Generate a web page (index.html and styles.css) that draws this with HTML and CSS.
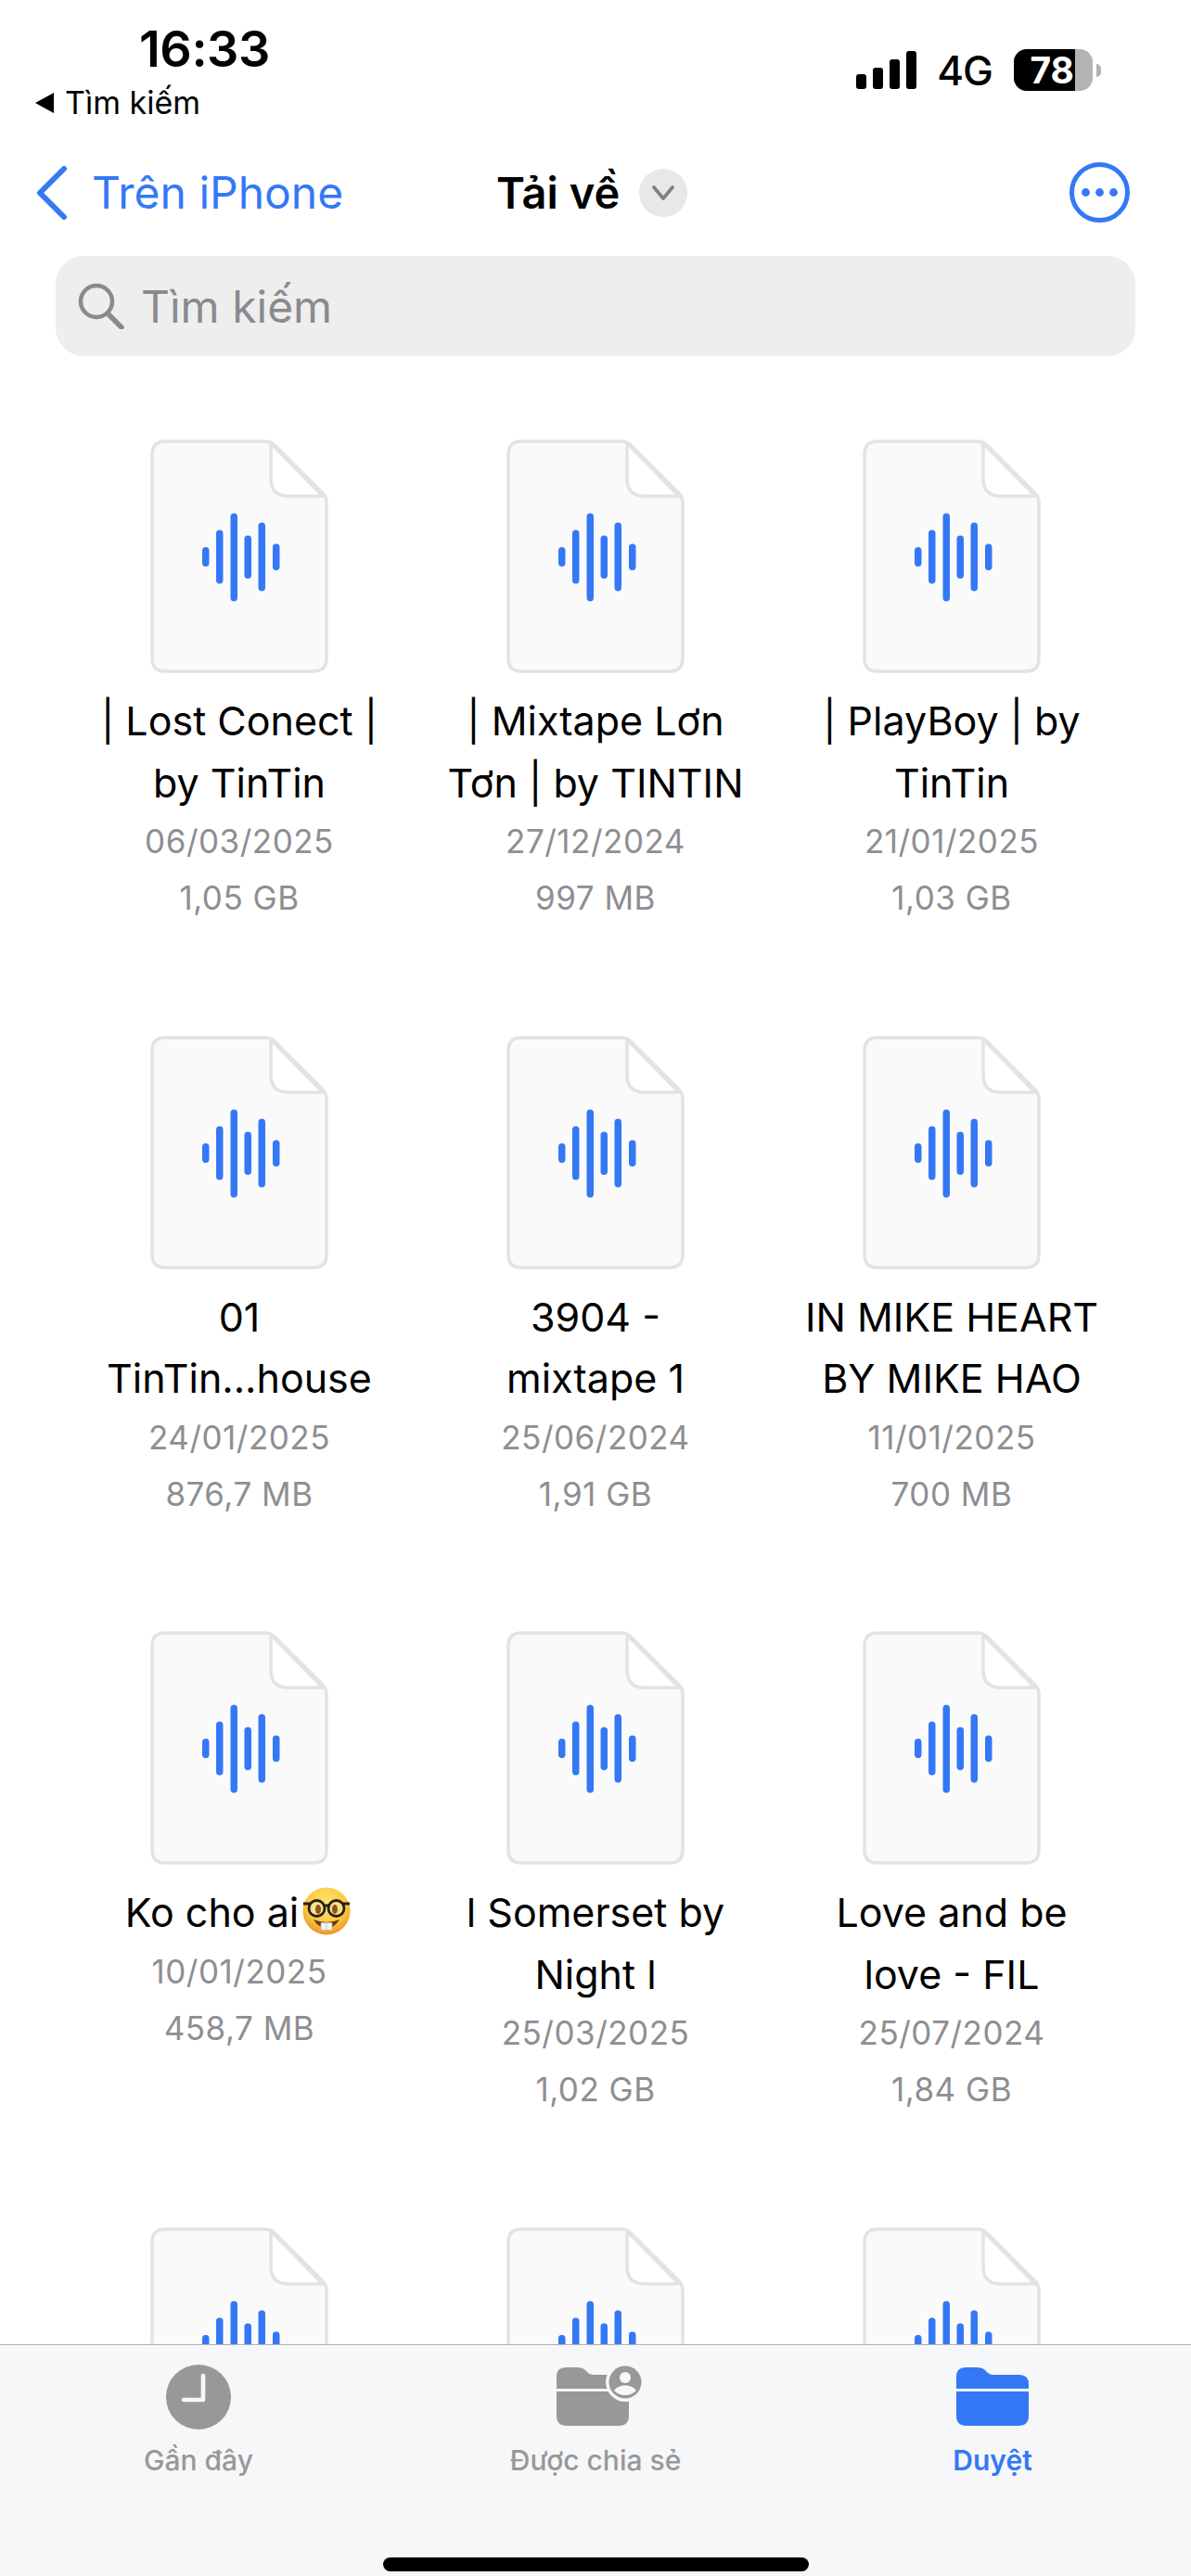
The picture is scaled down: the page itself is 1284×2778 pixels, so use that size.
FILE: index.html
```html
<!DOCTYPE html>
<html lang="vi">
<head>
  <meta charset="utf-8">
  <title>Tải về</title>
  <link rel="stylesheet" href="styles.css">
</head>
<body>

  <svg class="defs" width="0" height="0">
    <symbol id="doc" viewBox="0 0 192 252">
      <path d="M16 2H124Q130 2 134 6L186 58Q190 62 190 68V236Q190 250 176 250H16Q2 250 2 236V16Q2 2 16 2Z" fill="#fafafa" stroke="#e3e3e3" stroke-width="3.5"/>
      <path d="M130 4V42Q130 61 149 61H186Z" fill="#fff" stroke="#e3e3e3" stroke-width="3.5" stroke-linejoin="round"/>
      <g fill="#3478f6">
        <rect x="56" y="116" width="7.5" height="21" rx="3.7"/>
        <rect x="71" y="97.5" width="7.5" height="58" rx="3.7"/>
        <rect x="86.5" y="79.5" width="7.5" height="95" rx="3.7"/>
        <rect x="101.5" y="103.5" width="7.5" height="46.5" rx="3.7"/>
        <rect x="116.5" y="89.5" width="7.5" height="74" rx="3.7"/>
        <rect x="132" y="112.5" width="7.5" height="28.5" rx="3.7"/>
      </g>
    </symbol>
    <symbol id="folder" viewBox="0 0 78 63">
      <path d="M0 10Q0 0 10 0H22Q28 0 31 3L34 6Q36 8 40 8H68Q78 8 78 18V23H0Z" fill="currentColor"/>
      <path d="M0 26H78V52Q78 63 67 63H11Q0 63 0 52Z" fill="currentColor"/>
    </symbol>
  </svg>

  <div class="full_page">

    <div class="status">
      <div class="status_left">
        <div class="time">16:33</div>
        <div class="back_app"><span class="back_arrow"></span>Tìm kiếm</div>
      </div>
      <div class="status_right">
        <div class="signal">
          <span class="bar1"></span><span class="bar2"></span><span class="bar3"></span><span class="bar4"></span>
        </div>
        <span class="net">4G</span>
        <div class="battery"><div class="battery_level">78</div></div>
        <span class="battery_nub"></span>
      </div>
    </div>

    <div class="nav">
      <div class="nav_back">
        <svg width="36" height="60" viewBox="0 0 36 60"><path d="M31 4L5 30L31 56" fill="none" stroke="#3478f6" stroke-width="6" stroke-linecap="round" stroke-linejoin="round"/></svg>
        <span>Trên iPhone</span>
      </div>
      <div class="nav_title">
        <span>Tải về</span>
        <span class="title_circle">
          <svg width="24" height="16" viewBox="0 0 24 16"><path d="M2 2L12 14L22 2" fill="none" stroke="#808084" stroke-width="3.6" stroke-linecap="round" stroke-linejoin="round"/></svg>
        </span>
      </div>
      <div class="nav_more">
        <svg width="65" height="65" viewBox="0 0 65 65">
          <circle cx="32.5" cy="32.5" r="30" fill="none" stroke="#3478f6" stroke-width="5"/>
          <circle cx="17.5" cy="32.5" r="4.4" fill="#3478f6"/>
          <circle cx="32.5" cy="32.5" r="4.4" fill="#3478f6"/>
          <circle cx="47.5" cy="32.5" r="4.4" fill="#3478f6"/>
        </svg>
      </div>
    </div>

    <div class="search">
      <svg width="50" height="50" viewBox="0 0 50 50"><circle cx="20" cy="20" r="17" fill="none" stroke="#8a8a8e" stroke-width="4.5"/><path d="M32 33L47 48" stroke="#8a8a8e" stroke-width="5.5" stroke-linecap="round"/></svg>
      <span>Tìm kiếm</span>
    </div>

    <div class="files">
      <div class="file">
        <svg class="doc"><use href="#doc"/></svg>
        <div class="name">| Lost Conect |<br>by TinTin</div>
        <div class="meta">06/03/2025</div>
        <div class="meta">1,05 GB</div>
      </div>
      <div class="file">
        <svg class="doc"><use href="#doc"/></svg>
        <div class="name">| Mixtape Lơn<br>Tơn | by TINTIN</div>
        <div class="meta">27/12/2024</div>
        <div class="meta">997 MB</div>
      </div>
      <div class="file">
        <svg class="doc"><use href="#doc"/></svg>
        <div class="name">| PlayBoy | by<br>TinTin</div>
        <div class="meta">21/01/2025</div>
        <div class="meta">1,03 GB</div>
      </div>
      <div class="file">
        <svg class="doc"><use href="#doc"/></svg>
        <div class="name">01<br>TinTin...house</div>
        <div class="meta">24/01/2025</div>
        <div class="meta">876,7 MB</div>
      </div>
      <div class="file">
        <svg class="doc"><use href="#doc"/></svg>
        <div class="name">3904 -<br>mixtape 1</div>
        <div class="meta">25/06/2024</div>
        <div class="meta">1,91 GB</div>
      </div>
      <div class="file">
        <svg class="doc"><use href="#doc"/></svg>
        <div class="name">IN MIKE HEART<br>BY MIKE HAO</div>
        <div class="meta">11/01/2025</div>
        <div class="meta">700 MB</div>
      </div>
      <div class="file">
        <svg class="doc"><use href="#doc"/></svg>
        <div class="name name_emoji">Ko cho ai
          <svg class="emoji" width="52" height="52" viewBox="0 0 52 52">
            <defs>
              <radialGradient id="face" cx="50%" cy="35%" r="65%">
                <stop offset="0" stop-color="#ffe67a"/>
                <stop offset="0.65" stop-color="#fdc93f"/>
                <stop offset="1" stop-color="#ea9428"/>
              </radialGradient>
            </defs>
            <circle cx="26" cy="26" r="25.5" fill="url(#face)"/>
            <circle cx="15.5" cy="23" r="8.5" fill="#fbe08a" stroke="#2b2118" stroke-width="2.8"/>
            <circle cx="36.5" cy="23" r="8.5" fill="#fbe08a" stroke="#2b2118" stroke-width="2.8"/>
            <path d="M1 18L8 18M23 20H29M44 18L51 18" stroke="#2b2118" stroke-width="2.8" fill="none"/>
            <ellipse cx="17" cy="24" rx="3" ry="5" fill="#8a5520"/>
            <ellipse cx="35" cy="24" rx="3" ry="5" fill="#8a5520"/>
            <path d="M12 35Q26 41 40 35Q35 44 26 44Q17 44 12 35Z" fill="#6b3a14"/>
            <path d="M20 38.5H32V45Q32 46.5 30.5 46.5H21.5Q20 46.5 20 45Z" fill="#f4f4f2" stroke="#b9b2a6" stroke-width="0.7"/>
            <path d="M26 38.5V46.5" stroke="#b9b2a6" stroke-width="0.7"/>
          </svg>
        </div>
        <div class="meta">10/01/2025</div>
        <div class="meta">458,7 MB</div>
      </div>
      <div class="file">
        <svg class="doc"><use href="#doc"/></svg>
        <div class="name">l Somerset by<br>Night l</div>
        <div class="meta">25/03/2025</div>
        <div class="meta">1,02 GB</div>
      </div>
      <div class="file">
        <svg class="doc"><use href="#doc"/></svg>
        <div class="name">Love and be<br>love - FIL</div>
        <div class="meta">25/07/2024</div>
        <div class="meta">1,84 GB</div>
      </div>
      <div class="file"><svg class="doc"><use href="#doc"/></svg></div>
      <div class="file"><svg class="doc"><use href="#doc"/></svg></div>
      <div class="file"><svg class="doc"><use href="#doc"/></svg></div>
    </div>

    <div class="tabs">
      <div class="tab_row">
        <div class="tab">
          <svg class="tab_icon" width="90" height="70" viewBox="0 0 90 70">
            <circle cx="45" cy="35" r="35" fill="currentColor"/>
            <path d="M50 12V38H29" fill="none" stroke="#f6f7f8" stroke-width="4.6" stroke-linecap="round" stroke-linejoin="round"/>
          </svg>
          <span>Gần đây</span>
        </div>
        <div class="tab">
          <svg class="tab_icon tab_shared" width="96" height="70" viewBox="0 0 96 70">
            <use href="#folder" x="0" y="3" width="78" height="63"/>
            <circle cx="74" cy="19" r="21" fill="#f6f7f8"/>
            <circle cx="74" cy="19" r="17.5" fill="currentColor"/>
            <circle cx="74" cy="14" r="6" fill="#f6f7f8"/>
            <path d="M62 28Q66 22.5 74 22.5Q82 22.5 86 28Q81 33 74 33Q67 33 62 28Z" fill="#f6f7f8"/>
          </svg>
          <span>Được chia sẻ</span>
        </div>
        <div class="tab tab_active">
          <svg class="tab_icon" width="78" height="70" viewBox="0 0 78 70">
            <use href="#folder" x="0" y="3" width="78" height="63"/>
          </svg>
          <span>Duyệt</span>
        </div>
      </div>
      <div class="home_bar"></div>
    </div>

  </div>

</body>
</html>
```
FILE: styles.css
```css
* {
  box-sizing: border-box;
}

body {
  margin: 0;
  background-color: #fff;
  font-family: Inter, "Liberation Sans", sans-serif;
  color: #000;
}

.defs {
  display: block;
  height: 0;
}

.full_page {
  display: flex;
  flex-direction: column;
  width: 1284px;
  height: 2778px;
  overflow: hidden;
}

/* status bar */
.status {
  display: flex;
  justify-content: space-between;
  height: 175px;
  flex: none;
}

.status_left {
  padding: 24px 0 0 38px;
}

.time {
  padding-left: 112px;
  font-size: 54px;
  line-height: 58px;
  font-weight: 600;
  letter-spacing: -0.5px;
}

.back_app {
  display: flex;
  align-items: center;
  gap: 12px;
  margin-top: 7px;
  font-size: 34px;
  line-height: 44px;
}

.back_arrow {
  width: 0;
  height: 0;
  border-top: 11px solid transparent;
  border-bottom: 11px solid transparent;
  border-right: 20px solid #000;
}

.status_right {
  display: flex;
  align-items: flex-start;
  padding: 53px 97px 0 0;
}

.signal {
  display: flex;
  align-items: flex-end;
  gap: 7px;
  height: 41px;
  margin-top: 2px;
}

.signal span {
  width: 11px;
  background-color: #000;
  border-radius: 3px;
}

.bar1 { height: 16px; }
.bar2 { height: 23px; }
.bar3 { height: 32px; }
.bar4 { height: 41px; }

.net {
  margin: 0 23px 0 22px;
  font-size: 44px;
  line-height: 46px;
  font-weight: 500;
  letter-spacing: -1px;
}

.battery {
  width: 85px;
  height: 45px;
  overflow: hidden;
  background-color: #b3b3b3;
  border-radius: 14px;
}

.battery_level {
  width: 66px;
  height: 45px;
  padding-right: 1px;
  background-color: #000;
  color: #fff;
  font-size: 39px;
  line-height: 45px;
  font-weight: 700;
  text-align: right;
}

.battery_nub {
  width: 5px;
  height: 14px;
  margin: 16px 0 0 4px;
  background-color: #b3b3b3;
  border-radius: 0 7px 7px 0;
}

/* nav */
.nav {
  display: grid;
  grid-template-columns: 499px auto 1fr;
  align-items: center;
  height: 65px;
  flex: none;
  padding: 0 66px 0 38px;
}

.nav_back {
  display: flex;
  align-items: center;
  gap: 25px;
  color: #3478f6;
  font-size: 48px;
}

.nav_title {
  display: flex;
  align-items: center;
  gap: 21px;
  margin-left: -2px;
  font-size: 47px;
  font-weight: 600;
}

.title_circle {
  display: flex;
  align-items: center;
  justify-content: center;
  width: 52px;
  height: 52px;
  background-color: #e8e8e9;
  border-radius: 50%;
}

.nav_more {
  display: flex;
  justify-content: flex-end;
}

/* search */
.search {
  display: flex;
  align-items: center;
  gap: 18px;
  height: 108px;
  flex: none;
  margin: 36px 60px 0;
  padding-left: 24px;
  background-color: #eeeeef;
  border-radius: 30px;
  color: #8a8a8e;
  font-size: 48px;
}

/* file grid */
.files {
  display: grid;
  flex: 1;
  min-height: 0;
  grid-template-columns: repeat(3, 384px);
  grid-auto-rows: 642.5px;
  padding: 90px 66px 0;
  overflow: hidden;
}

.file {
  display: flex;
  flex-direction: column;
  align-items: center;
  text-align: center;
}

.doc {
  display: block;
  flex: none;
  width: 192px;
  height: 252px;
  margin-bottom: 18px;
}

.name {
  font-size: 43px;
  line-height: 66.5px;
}

.name_emoji {
  display: flex;
  align-items: center;
  gap: 4px;
  height: 66.5px;
  margin-right: 3px;
  white-space: nowrap;
}

.emoji {
  flex: none;
  margin-bottom: 2px;
}

.meta {
  color: #8e8e93;
  font-size: 35px;
  line-height: 61px;
  letter-spacing: 0.5px;
}

/* tab bar */
.tabs {
  flex: none;
  height: 250px;
  background-color: #f6f7f8;
  border-top: 1px solid #b1b1b1;
}

.tab_row {
  display: grid;
  grid-template-columns: repeat(3, 1fr);
  padding-top: 21px;
}

.tab {
  display: flex;
  flex-direction: column;
  align-items: center;
  gap: 13px;
  color: #97989a;
  font-size: 30px;
  line-height: 40px;
  font-weight: 500;
}

.tab_icon {
  display: block;
}

.tab_shared {
  margin-left: 12px;
}

.tab_active {
  color: #3478f6;
  font-weight: 600;
}

.home_bar {
  width: 459px;
  height: 15px;
  margin: 85px auto 0;
  background-color: #000;
  border-radius: 8px;
}
```
